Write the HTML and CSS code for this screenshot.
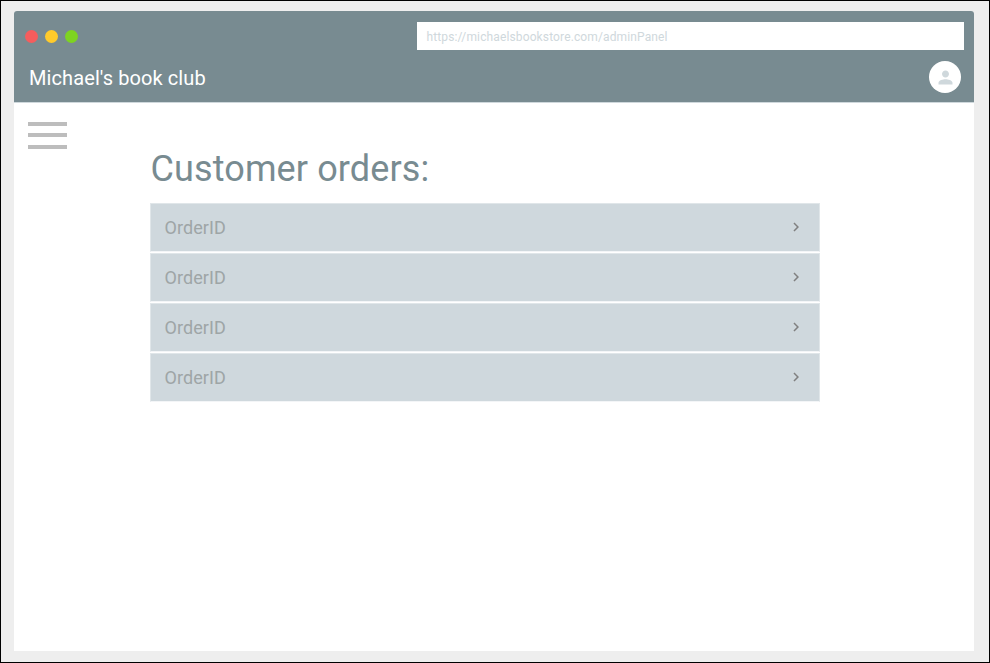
FILE: index.html
```html
<!DOCTYPE html>
<html lang="en">
<head>
<meta charset="utf-8">
<title>Michael's book club</title>
<link rel="stylesheet" href="styles.css">
</head>
<body>
<div class="window">
  <header class="header">
    <div class="chrome">
      <div class="lights"><span class="light red"></span><span class="light yellow"></span><span class="light green"></span></div>
      <div class="address"><span class="url">https://michaelsbookstore.com/adminPanel</span></div>
    </div>
    <div class="appbar">
      <div class="brand"><span class="brand-text">Michael's book club</span></div>
      <div class="avatar"><svg width="21" height="21" viewBox="0 0 24 24"><path fill="#cfd8dc" d="M12 12c2.200 0 4-1.800 4-4s-1.800-4-4-4-4 1.800-4 4 1.800 4 4 4zm0 2c-2.700 0-8 1.300-8 4v2h16v-2c0-2.700-5.300-4-8-4z"/></svg></div>
    </div>
  </header>
  <main class="content">
    <div class="menu"><span></span><span></span><span></span></div>
    <section class="orders">
      <h1><span class="title">Customer orders:</span></h1>
      <ul class="list">
        <li><span class="order">OrderID</span><svg width="18" height="18" viewBox="0 0 24 24"><path fill="#808080" d="M8.600 16.600L13.200 12 8.600 7.400 10 6l6 6-6 6z"/></svg></li>
        <li><span class="order">OrderID</span><svg width="18" height="18" viewBox="0 0 24 24"><path fill="#808080" d="M8.600 16.600L13.200 12 8.600 7.400 10 6l6 6-6 6z"/></svg></li>
        <li><span class="order">OrderID</span><svg width="18" height="18" viewBox="0 0 24 24"><path fill="#808080" d="M8.600 16.600L13.200 12 8.600 7.400 10 6l6 6-6 6z"/></svg></li>
        <li><span class="order">OrderID</span><svg width="18" height="18" viewBox="0 0 24 24"><path fill="#808080" d="M8.600 16.600L13.200 12 8.600 7.400 10 6l6 6-6 6z"/></svg></li>
      </ul>
    </section>
  </main>
</div>
</body>
</html>
```
FILE: styles.css
```css
* { box-sizing: border-box; }
body {
  margin: 0;
  height: 663px;
  padding: 10px 15px 11px 13px;
  border: 1px solid #000;
  background: #eee;
  font-family: Roboto, "Liberation Sans", sans-serif;
  overflow: hidden;
}
.window {
  width: 960px;
  height: 640px;
  background: #fff;
  border-radius: 3px 3px 0 0;
  overflow: hidden;
}
.header {
  height: 92px;
  background: #788b91;
  border-bottom: 1px solid #cfd8dc;
  padding: 11px 10px 0 11px;
}
.chrome { display: flex; justify-content: space-between; height: 28px; }
.lights { display: flex; gap: 7px; padding-top: 7.500px; }
.light { width: 13px; height: 13px; border-radius: 50%; }
.red { background: #f55d5d; }
.yellow { background: #ffcb2b; }
.green { background: #7ed321; }
.address {
  width: 547px;
  height: 28px;
  background: #fff;
  padding-left: 9.500px;
  font-size: 12px;
  line-height: 31px;
  color: #cfd8dc;
}
.url { letter-spacing: 0.130px; }
.appbar {
  display: flex;
  justify-content: space-between;
  padding: 11px 3px 0 4px;
}
.brand {
  font-size: 20px;
  line-height: 35px;
  letter-spacing: 0.100px;
  color: #fff;
}
.avatar {
  width: 32px;
  height: 32px;
  border-radius: 50%;
  background: #fff;
  display: flex;
  align-items: center;
  justify-content: center;
}
.content { display: flex; padding-left: 14px; }
.menu {
  width: 39px;
  display: flex;
  flex-direction: column;
  gap: 7.500px;
  padding-top: 18.500px;
}
.menu span { height: 4.200px; background: #bdbdbd; }
.orders { width: 670px; margin-left: 83px; }
h1 {
  margin: 0;
  padding: 42px 0 0 0.500px;
  font-size: 36px;
  line-height: 48px;
  letter-spacing: 0.120px;
  font-weight: 400;
  color: #788b91;
}
.list {
  list-style: none;
  margin: 10px 0 0;
  padding: 0;
  display: flex;
  flex-direction: column;
  gap: 1px;
}
.list li {
  height: 49px;
  padding: 0 14px 0 13.500px;
  background: #cfd8dd;
  border: 1px solid #e0e6e9;
  border-bottom-color: #f3f5f7;
  display: flex;
  align-items: center;
  justify-content: space-between;
  font-size: 18px;
  letter-spacing: 0.080px;
  color: #9ea5a6;
}
.list svg { margin-bottom: 1px; }
```
